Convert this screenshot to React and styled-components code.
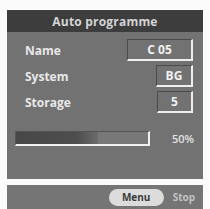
import styled, { createGlobalStyle } from 'styled-components';

const GlobalStyle = createGlobalStyle`
  html, body {
    margin: 0;
    padding: 0;
    background: #fbfbfb;
    overflow: hidden;
  }
`;

const rows = [
  { label: 'Name', value: 'C 05', width: 66 },
  { label: 'System', value: 'BG', width: 37 },
  { label: 'Storage', value: '5', width: 36 },
];

const App = () => {
  const progress = 50;

  return (
    <Screen>
      <GlobalStyle />
      <Panel>
        <TitleBar>Auto programme</TitleBar>
        <Rows>
          {rows.map((row) => (
            <Row key={row.label}>
              <Label>{row.label}</Label>
              <ValueBox $width={row.width}>{row.value}</ValueBox>
            </Row>
          ))}
        </Rows>
        <ProgressRow>
          <Track>
            <Fill style={{ width: `${progress + 12}%` }} />
          </Track>
          <Percent>{progress}%</Percent>
        </ProgressRow>
      </Panel>
      <BottomBar>
        <MenuButton>Menu</MenuButton>
        <StopLabel>Stop</StopLabel>
      </BottomBar>
    </Screen>
  );
};

const Screen = styled.div`
  width: 210px;
  height: 209px;
  padding: 10px 7px 0 7px;
  box-sizing: border-box;
  display: flex;
  flex-direction: column;
  gap: 6px;
  font-family: 'Open Sans', 'Liberation Sans', sans-serif;
`;

const Panel = styled.div`
  height: 169px;
  display: flex;
  flex-direction: column;
  background: #727272;
`;

const TitleBar = styled.header`
  height: 22px;
  display: flex;
  align-items: center;
  justify-content: center;
  background: #3d3d3d;
  color: #d4d4d4;
  font-size: 12px;
  font-weight: 700;
  letter-spacing: 0.2px;
`;

const Rows = styled.div`
  display: flex;
  flex-direction: column;
  gap: 4px;
  padding: 7px 10px 0 18px;
`;

const Row = styled.div`
  height: 22px;
  display: flex;
  align-items: center;
  justify-content: space-between;
`;

const Label = styled.span`
  color: #e8e8e8;
  font-size: 12px;
  font-weight: 700;
`;

const ValueBox = styled.div`
  width: ${(p) => p.$width}px;
  height: 22px;
  box-sizing: border-box;
  display: flex;
  align-items: center;
  justify-content: center;
  border-top: 1px solid #4a4a4a;
  border-left: 1px solid #4a4a4a;
  border-bottom: 2px solid #eeeeee;
  border-right: 2px solid #eeeeee;
  color: #f0f0f0;
  font-size: 12px;
  font-weight: 700;
`;

const ProgressRow = styled.div`
  display: flex;
  align-items: center;
  justify-content: space-between;
  padding: 18px 8px 0 8px;
`;

const Track = styled.div`
  width: 135px;
  height: 15px;
  box-sizing: border-box;
  border-top: 1px solid #555;
  border-left: 1px solid #555;
  border-bottom: 2px solid #f0f0f0;
  border-right: 2px solid #f0f0f0;
  background: #787878;
`;

const Fill = styled.div`
  height: 100%;
  background: linear-gradient(90deg, #474747 0%, #4e4e4e 75%, #6c6c6c 100%);
`;

const Percent = styled.span`
  color: #e2e2e2;
  font-size: 11px;
  font-weight: 600;
  margin-right: 1px;
`;

const BottomBar = styled.div`
  flex: 1;
  display: flex;
  align-items: center;
  justify-content: flex-end;
  gap: 9px;
  padding: 0 8px 0 0;
  background: #757575;
`;

const MenuButton = styled.span`
  width: 55px;
  height: 17px;
  display: flex;
  align-items: center;
  justify-content: center;
  border-radius: 9px;
  background: #dcdcdc;
  color: #3a3a3a;
  font-size: 10px;
  font-weight: 700;
`;

const StopLabel = styled.span`
  color: #c2c2c2;
  font-size: 10px;
  font-weight: 700;
`;

export default App;
